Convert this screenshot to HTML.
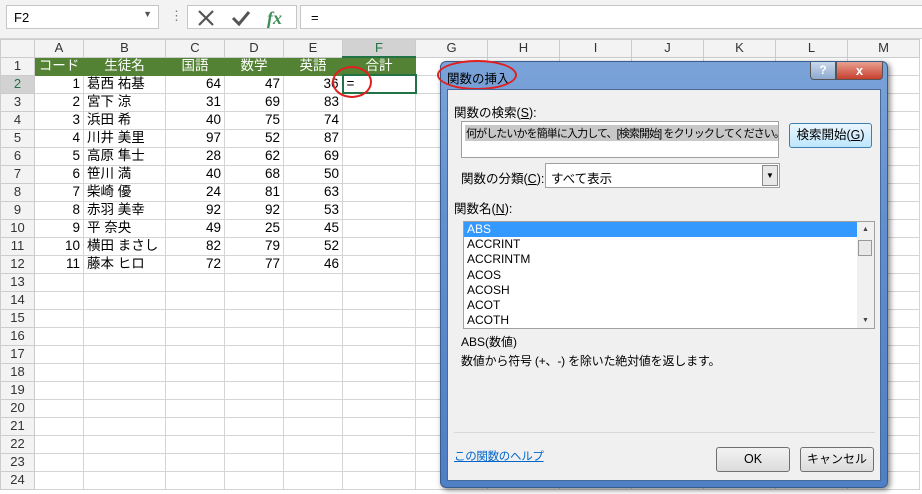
<!DOCTYPE html><html><head><meta charset="utf-8"><style>
*{box-sizing:border-box;margin:0;padding:0}
body{width:922px;height:494px;overflow:hidden;background:#fff;font-family:"Liberation Sans","Noto Sans CJK JP",sans-serif;position:relative;font-size:13px}
.top{position:absolute;left:0;top:0;width:922px;height:39px;background:#f3f3f3;border-bottom:1px solid #d4d4d4}
.box{position:absolute;background:#fff;border:1px solid #c6c6c6}
table{position:absolute;left:0;top:39px;border-collapse:collapse;table-layout:fixed}
td{border:1px solid #d4d4d4;height:18px;padding:0 3px;font-size:13.5px;white-space:nowrap;overflow:hidden;line-height:16px}
tr.h td{height:17px;background:#f3f3f3;text-align:center;color:#333;font-size:13px;border-color:#ccc}
td.rh{background:#f3f3f3;text-align:center;color:#333;font-size:13px;border-color:#ccc}
td.r{text-align:right}
tr.g td.d{background:#548235;color:#fff;text-align:center;border-color:#548235}
.dlg{position:absolute;left:440px;top:61px;width:448px;height:427px;border-radius:6px;background:linear-gradient(#7aa3d8,#5f8fd0 40%,#4f7fc4);border:1px solid #3a5c8c;box-shadow:2px 2px 6px rgba(0,0,0,.5)}
.in{position:absolute;left:6px;top:27px;width:434px;height:392px;background:#f0f0f0;border:1px solid #49699a}
.t{position:absolute;white-space:nowrap;font-size:12.5px;color:#000}
.btn{position:absolute;border:1px solid #707070;border-radius:3px;background:linear-gradient(#f2f2f2,#dcdcdc);text-align:center;font-size:12.5px;line-height:22px;white-space:nowrap}
</style></head><body>
<div class="top">
<div class="box" style="left:6px;top:5px;width:153px;height:24px;padding:4px 7px;font-size:13px">F2<span style="position:absolute;right:6px;top:3px;font-size:9px;color:#555">▼</span></div>
<div style="position:absolute;left:170px;top:8px;color:#777;font-size:13px">⋮</div>
<div class="box" style="left:187px;top:5px;width:110px;height:24px"></div>
<svg style="position:absolute;left:195px;top:8px" width="100" height="20"><path d="M4 3L18 17M18 3L4 17" stroke="#555" stroke-width="2.2"/><path d="M38 10L44 16L54 4" stroke="#555" stroke-width="3" fill="none"/><text x="72" y="16" font-family="Liberation Serif" font-style="italic" font-weight="bold" font-size="18" fill="#3e8e5a">fx</text></svg>
<div class="box" style="left:300px;top:5px;width:630px;height:24px;padding:4px 10px">=</div>
</div>
<table>
<colgroup><col style="width:34px"><col style="width:49px"><col style="width:82px"><col style="width:59px"><col style="width:59px"><col style="width:59px"><col style="width:73px"><col style="width:72px"><col style="width:72px"><col style="width:72px"><col style="width:72px"><col style="width:72px"><col style="width:72px"><col style="width:72px"></colgroup>
<tr class="h"><td></td><td>A</td><td>B</td><td>C</td><td>D</td><td>E</td><td style="background:#d2d2d2;border-bottom:2px solid #217346;color:#217346">F</td><td>G</td><td>H</td><td>I</td><td>J</td><td>K</td><td>L</td><td>M</td></tr>
<tr class="g"><td class="rh">1</td><td class="d">コード</td><td class="d">生徒名</td><td class="d">国語</td><td class="d">数学</td><td class="d">英語</td><td class="d">合計</td><td></td><td></td><td></td><td></td><td></td><td></td><td></td></tr>
<tr><td class="rh" style="background:#d2d2d2;color:#217346">2</td><td class="r">1</td><td>葛西 祐基</td><td class="r">64</td><td class="r">47</td><td class="r">36</td><td style="border:2px solid #217346">=</td><td></td><td></td><td></td><td></td><td></td><td></td><td></td></tr>
<tr><td class="rh">3</td><td class="r">2</td><td>宮下 涼</td><td class="r">31</td><td class="r">69</td><td class="r">83</td><td></td><td></td><td></td><td></td><td></td><td></td><td></td><td></td></tr>
<tr><td class="rh">4</td><td class="r">3</td><td>浜田 希</td><td class="r">40</td><td class="r">75</td><td class="r">74</td><td></td><td></td><td></td><td></td><td></td><td></td><td></td><td></td></tr>
<tr><td class="rh">5</td><td class="r">4</td><td>川井 美里</td><td class="r">97</td><td class="r">52</td><td class="r">87</td><td></td><td></td><td></td><td></td><td></td><td></td><td></td><td></td></tr>
<tr><td class="rh">6</td><td class="r">5</td><td>高原 隼士</td><td class="r">28</td><td class="r">62</td><td class="r">69</td><td></td><td></td><td></td><td></td><td></td><td></td><td></td><td></td></tr>
<tr><td class="rh">7</td><td class="r">6</td><td>笹川 満</td><td class="r">40</td><td class="r">68</td><td class="r">50</td><td></td><td></td><td></td><td></td><td></td><td></td><td></td><td></td></tr>
<tr><td class="rh">8</td><td class="r">7</td><td>柴崎 優</td><td class="r">24</td><td class="r">81</td><td class="r">63</td><td></td><td></td><td></td><td></td><td></td><td></td><td></td><td></td></tr>
<tr><td class="rh">9</td><td class="r">8</td><td>赤羽 美幸</td><td class="r">92</td><td class="r">92</td><td class="r">53</td><td></td><td></td><td></td><td></td><td></td><td></td><td></td><td></td></tr>
<tr><td class="rh">10</td><td class="r">9</td><td>平 奈央</td><td class="r">49</td><td class="r">25</td><td class="r">45</td><td></td><td></td><td></td><td></td><td></td><td></td><td></td><td></td></tr>
<tr><td class="rh">11</td><td class="r">10</td><td>横田 まさし</td><td class="r">82</td><td class="r">79</td><td class="r">52</td><td></td><td></td><td></td><td></td><td></td><td></td><td></td><td></td></tr>
<tr><td class="rh">12</td><td class="r">11</td><td>藤本 ヒロ</td><td class="r">72</td><td class="r">77</td><td class="r">46</td><td></td><td></td><td></td><td></td><td></td><td></td><td></td><td></td></tr>
<tr><td class="rh">13</td><td></td><td></td><td></td><td></td><td></td><td></td><td></td><td></td><td></td><td></td><td></td><td></td><td></td></tr>
<tr><td class="rh">14</td><td></td><td></td><td></td><td></td><td></td><td></td><td></td><td></td><td></td><td></td><td></td><td></td><td></td></tr>
<tr><td class="rh">15</td><td></td><td></td><td></td><td></td><td></td><td></td><td></td><td></td><td></td><td></td><td></td><td></td><td></td></tr>
<tr><td class="rh">16</td><td></td><td></td><td></td><td></td><td></td><td></td><td></td><td></td><td></td><td></td><td></td><td></td><td></td></tr>
<tr><td class="rh">17</td><td></td><td></td><td></td><td></td><td></td><td></td><td></td><td></td><td></td><td></td><td></td><td></td><td></td></tr>
<tr><td class="rh">18</td><td></td><td></td><td></td><td></td><td></td><td></td><td></td><td></td><td></td><td></td><td></td><td></td><td></td></tr>
<tr><td class="rh">19</td><td></td><td></td><td></td><td></td><td></td><td></td><td></td><td></td><td></td><td></td><td></td><td></td><td></td></tr>
<tr><td class="rh">20</td><td></td><td></td><td></td><td></td><td></td><td></td><td></td><td></td><td></td><td></td><td></td><td></td><td></td></tr>
<tr><td class="rh">21</td><td></td><td></td><td></td><td></td><td></td><td></td><td></td><td></td><td></td><td></td><td></td><td></td><td></td></tr>
<tr><td class="rh">22</td><td></td><td></td><td></td><td></td><td></td><td></td><td></td><td></td><td></td><td></td><td></td><td></td><td></td></tr>
<tr><td class="rh">23</td><td></td><td></td><td></td><td></td><td></td><td></td><td></td><td></td><td></td><td></td><td></td><td></td><td></td></tr>
<tr><td class="rh">24</td><td></td><td></td><td></td><td></td><td></td><td></td><td></td><td></td><td></td><td></td><td></td><td></td><td></td></tr>
</table>
<div style="position:absolute;left:332px;top:66px;width:40px;height:32px;border:2px solid #e02020;border-radius:50%"></div>
<div class="dlg">
<div class="t" style="left:6px;top:6px;font-size:12.5px">関数の挿入</div>
<div style="position:absolute;left:-4px;top:-2px;width:80px;height:30px;border:2px solid #e02020;border-radius:50%"></div>
<div style="position:absolute;left:369px;top:0;width:26px;height:18px;border:1px solid #555;border-top:0;border-radius:0 0 0 4px;background:linear-gradient(#c9d7ea,#8eaad0);text-align:center;color:#fff;font-weight:bold;font-size:12px;line-height:17px">?</div>
<div style="position:absolute;left:395px;top:0;width:47px;height:18px;border:1px solid #555;border-top:0;border-radius:0 0 4px 0;background:linear-gradient(#e8a090,#c84030);text-align:center;color:#fff;font-weight:bold;font-size:13px;line-height:17px">x</div>
<div class="in">
<div class="t" style="left:6px;top:12px">関数の検索(<u>S</u>):</div>
<div style="position:absolute;left:13px;top:31px;width:318px;height:37px;background:#fff;border:1px solid #a0a0a0;overflow:hidden"><span style="position:absolute;left:3px;top:3px;background:#c8c8c8;font-size:11px;letter-spacing:-0.9px;padding:0 1px;white-space:nowrap">何がしたいかを簡単に入力して、[検索開始] をクリックしてください。</span></div>
<div class="btn" style="left:341px;top:33px;width:83px;height:25px;border-color:#3c7fb1;background:linear-gradient(#eaf6fd,#bee6fd)">検索開始(<u>G</u>)</div>
<div class="t" style="left:13px;top:78px">関数の分類(<u>C</u>):</div>
<div style="position:absolute;left:97px;top:73px;width:235px;height:25px;background:#fff;border:1px solid #a0a0a0;padding:4px 5px;font-size:12.5px">すべて表示<span style="position:absolute;right:1px;top:1px;width:16px;height:21px;background:#e8e8e8;border:1px solid #888;font-size:8px;text-align:center;line-height:20px">▼</span></div>
<div class="t" style="left:6px;top:108px">関数名(<u>N</u>):</div>
<div style="position:absolute;left:15px;top:131px;width:412px;height:108px;background:#fff;border:1px solid #a0a0a0;font-size:12px;line-height:15.2px">
<div style="background:#3399ff;color:#fff;width:393px;padding-left:3px">ABS</div>
<div style="padding-left:3px">ACCRINT<br>ACCRINTM<br>ACOS<br>ACOSH<br>ACOT<br>ACOTH</div>
<div style="position:absolute;right:0;top:0;width:17px;height:106px;background:#f0f0f0"><div style="position:absolute;left:1px;top:18px;width:14px;height:16px;border:1px solid #999;background:#e8e8e8"></div><div style="position:absolute;top:0;width:17px;text-align:center;font-size:7px;color:#444;line-height:15px">▲</div><div style="position:absolute;bottom:0;width:17px;text-align:center;font-size:7px;color:#444;line-height:15px">▼</div></div>
</div>
<div class="t" style="left:13px;top:243px;font-size:12px">ABS(数値)</div>
<div class="t" style="left:13px;top:262px;font-size:12px;letter-spacing:-0.2px">数値から符号 (+、-) を除いた絶対値を返します。</div>
<div style="position:absolute;left:6px;top:342px;width:421px;height:1px;background:#d8d8d8"></div>
<div class="t" style="left:6px;top:358px;color:#0066cc;text-decoration:underline;font-size:11.5px;letter-spacing:-0.3px">この関数のヘルプ</div>
<div class="btn" style="left:268px;top:357px;width:74px;height:25px">OK</div>
<div class="btn" style="left:352px;top:357px;width:74px;height:25px;font-size:12px">キャンセル</div>
</div>
</div>
</body></html>
